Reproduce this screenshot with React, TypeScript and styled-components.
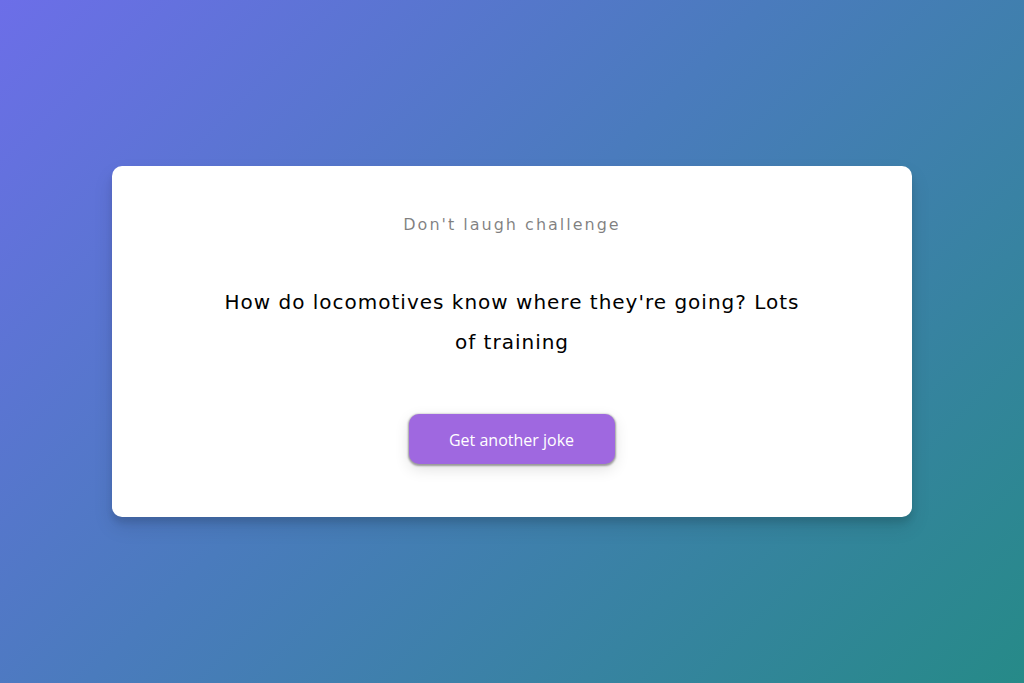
import React from "react";
import styled, { createGlobalStyle } from "styled-components";

const Global = createGlobalStyle`
  * { box-sizing: border-box; }
  html, body { margin: 0; padding: 0; }
  body {
    background: linear-gradient(135deg, #6c6ee8 0%, #4a7bbd 45%, #268a88 100%);
    font-family: "DejaVu Sans", Verdana, sans-serif;
    min-height: 100vh;
    overflow: hidden;
  }
`;

const Page = styled.div`
  height: 683px;
  display: flex;
  align-items: center;
  justify-content: center;
  padding: 20px;
`;

const Card = styled.div`
  background: #fff;
  border-radius: 10px;
  box-shadow: 0 10px 20px rgba(0, 0, 0, 0.1), 0 6px 6px rgba(0, 0, 0, 0.1);
  padding: 50px 20px 53px;
  text-align: center;
  width: 800px;
  max-width: 100%;
`;

const Title = styled.h3`
  margin: 0;
  font-size: 16px;
  font-weight: normal;
  line-height: 17px;
  letter-spacing: 2px;
  color: rgba(0, 0, 0, 0.5);
`;

const Joke = styled.div`
  font-size: 20px;
  letter-spacing: 1px;
  line-height: 40px;
  margin: 49px auto 52px;
  max-width: 600px;
  color: #000;
`;

const Actions = styled.div`
  display: flex;
  justify-content: center;
`;

const Button = styled.button`
  background-color: #9f68e0;
  color: #fff;
  border: 0;
  border-radius: 10px;
  box-shadow: 0 5px 15px rgba(0, 0, 0, 0.12), 0 1px 2px 1px rgba(0, 0, 0, 0.35);
  padding: 15px 41px 13px 40px;
  font-family: "Open Sans", "Noto Sans", sans-serif;
  font-size: 16px;
  line-height: 22px;
  cursor: pointer;
`;

export default function App() {
  return (
    <>
      <Global />
      <Page>
        <Card>
          <Title>Don't laugh challenge</Title>
          <Joke>How do locomotives know where they're going? Lots of training</Joke>
          <Actions>
            <Button>Get another joke</Button>
          </Actions>
        </Card>
      </Page>
    </>
  );
}
